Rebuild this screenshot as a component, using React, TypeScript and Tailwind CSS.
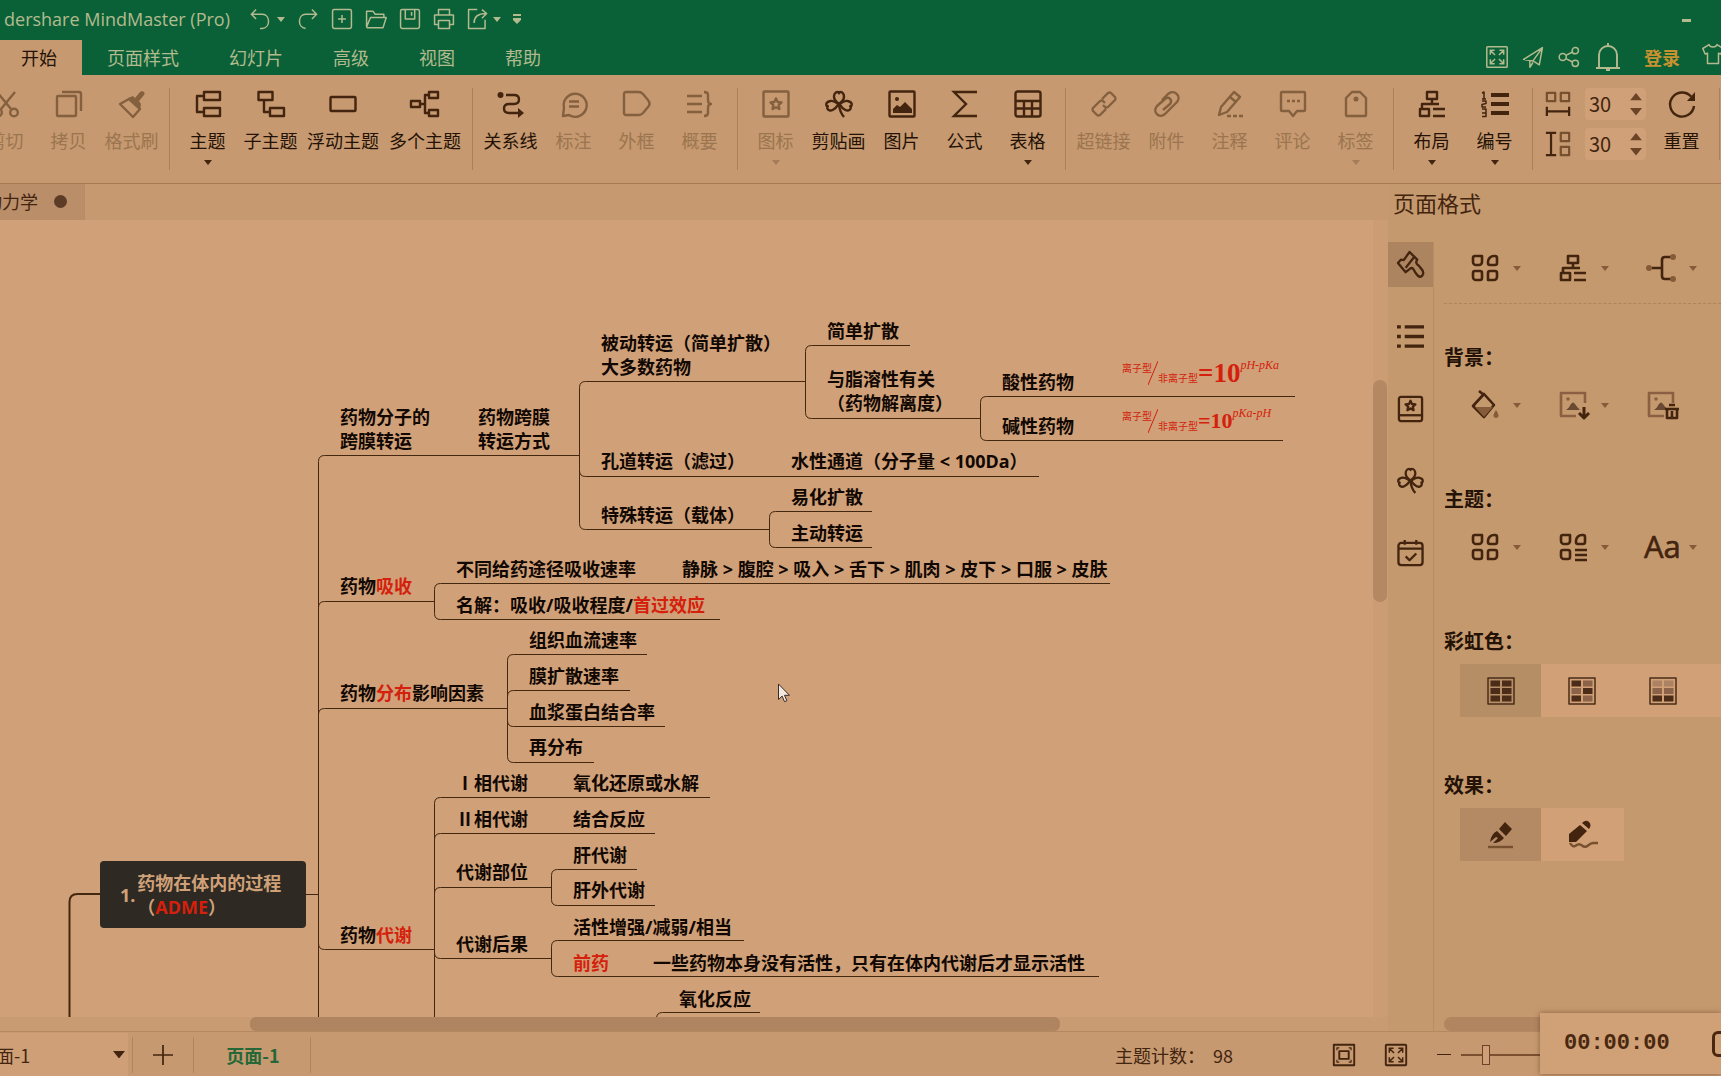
import type { ReactNode } from "react";
import clsx from "clsx";

/* ---------- icons ---------- */

type IconProps = { children: ReactNode; className?: string; stroke?: number };

function Icon({ children, className = "size-7", stroke = 2.4 }: IconProps) {
  return (
    <svg
      viewBox="0 0 28 28"
      className={clsx("shrink-0 overflow-visible", className)}
      fill="none"
      stroke="currentColor"
      strokeWidth={stroke}
      strokeLinejoin="round"
      aria-hidden="true"
    >
      {children}
    </svg>
  );
}

function Caret({ className = "w-2" }: { className?: string }) {
  return (
    <svg viewBox="0 0 8 5" className={clsx("shrink-0", className)} fill="currentColor" aria-hidden="true">
      <path d="M0 0h8L4 5z" />
    </svg>
  );
}

const star = "M14 8.5l1.7 3.5 3.8.5-2.8 2.7.7 3.8-3.4-1.8-3.4 1.8.7-3.8-2.8-2.7 3.8-.5z";

const cloverShape = (
  <>
    <path d="M14 14c-3-2.2-5-4.300-5-7.200C9 4.500 10.500 2 12.500 2c.8 0 1.500.5 1.500 1.200C14 2.500 14.700 2 15.500 2 17.500 2 19 4.500 19 6.800c0 2.900-2 5-5 7.200z" />
    <path d="M13.500 14.200C10.500 12 8 10.500 5.500 11 3 11.500 1 13 1.300 15c.1.900.7 1.300 1.500 1.300-.6.500-.8 1.200-.5 2C3 20.500 5.500 21 7.600 20c2.700-1.200 4.400-3.200 5.900-5.800z" />
    <path d="M14.500 14.200c3-2.200 5.500-3.700 8-3.200 2.500.5 4.500 2 4.200 4-.1.900-.7 1.300-1.500 1.300.6.500.8 1.200.5 2-.7 2.200-3.200 2.700-5.300 1.700-2.700-1.200-4.400-3.200-5.900-5.800z" />
    <path d="M14 14.500c.4 5 2 9 5 12.500" />
  </>
);

const layoutShape = (
  <>
    <path d="M9 2h10v7H9zM14 9v5M4 19v-5h17M2 19h9v7H2z" />
    <path d="M15 19h12M15 26h12" strokeLinejoin="miter" />
  </>
);

const petal = (
  <>
    <path d="M4 2h7v6a3 3 0 0 1-3 3H5a3 3 0 0 1-3-3V4a2 2 0 0 1 2-2z" />
    <path d="M17 8a6 6 0 0 1 6-6h1a2 2 0 0 1 2 2v5a2 2 0 0 1-2 2h-5a2 2 0 0 1-2-2z" />
    <path d="M4 17h5a2 2 0 0 1 2 2v5a2 2 0 0 1-2 2H5a3 3 0 0 1-3-3v-4a2 2 0 0 1 2-2z" />
  </>
);

const fourPetals = (
  <>
    {petal}
    <path d="M19 17h5a2 2 0 0 1 2 2v4a3 3 0 0 1-3 3h-6v-7a2 2 0 0 1 2-2z" />
  </>
);

const pictureShape = (
  <>
    <path d="M26 12V2H2v23h15" stroke="#8a5f42" />
    <circle cx="9" cy="8" r="1.800" fill="#8a5f42" stroke="none" />
    <path d="M7 19q3-2 5-6 2-3 4 0 2 3 5 6z" fill="#6b4a33" stroke="none" />
  </>
);

/* ---------- ribbon ---------- */

type Tool = {
  label: string;
  icon: ReactNode;
  disabled?: boolean;
  menu?: boolean;
  wide?: boolean;
};

const toolGroups: Tool[][] = [
  [
    {
      label: "剪切",
      disabled: true,
      icon: (
        <>
          <path d="M23 2L9 19M5 2l14 17" />
          <circle cx="6" cy="22.500" r="3.800" />
          <circle cx="22" cy="22.500" r="3.800" />
        </>
      ),
    },
    {
      label: "拷贝",
      disabled: true,
      icon: (
        <>
          <rect x="2" y="6" width="19" height="20" rx="1" />
          <path d="M7 2h17a2 2 0 0 1 2 2v17" />
        </>
      ),
    },
    {
      label: "格式刷",
      disabled: true,
      icon: (
        <>
          <path d="M2 14l9-5 11 10-7 8z" />
          <path d="M10 8l5-2 2 2 5-6c2-2 6 0 4 3l-5 6 2 3-1 6z" fill="currentColor" stroke="none" />
        </>
      ),
    },
  ],
  [
    {
      label: "主题",
      menu: true,
      icon: <path d="M10 2h16v8H10zM10 18h16v8H10zM10 6H3v16h7" />,
    },
    {
      label: "子主题",
      icon: <path d="M1.500 2h14v8h-14zM13 18h14v8H13zM7 10v12h6" />,
    },
    {
      label: "浮动主题",
      wide: true,
      icon: <rect x="1.500" y="7" width="25" height="14" rx="1" />,
    },
    {
      label: "多个主题",
      wide: true,
      icon: <path d="M0 11h9v6H0zM18 2h9v6h-9zM18 20h9v6h-9zM18 5h-4v18h4M9 14h5" />,
    },
  ],
  [
    {
      label: "关系线",
      icon: (
        <>
          <circle cx="3.500" cy="5" r="3" fill="currentColor" stroke="none" />
          <path d="M9 5h8q5 0 5 4.500T17 14h-5q-5 0-5 4.500t5 4.500h10" />
          <path d="M21 18l6 5-6 5z" fill="currentColor" stroke="none" />
        </>
      ),
    },
    {
      label: "标注",
      disabled: true,
      icon: <path d="M3 26l1-8a11.500 11.500 0 1 1 5 7zM9 11.500h10M9 16.500h10" />,
    },
    {
      label: "外框",
      disabled: true,
      icon: <path d="M3 2h13q2 0 4 2l5 6q3 4 0 7l-5 6q-2 2-4 2H3q-2 0-2-2V4q0-2 2-2z" />,
    },
    {
      label: "概要",
      disabled: true,
      icon: <path d="M1 6h15M1 14h15M1 22h15M18 2q4 0 4 3v5q0 4 3 4-3 0-3 4v5q0 3-4 3" />,
    },
  ],
  [
    {
      label: "图标",
      disabled: true,
      menu: true,
      icon: (
        <>
          <rect x="1.500" y="1.500" width="25" height="25" rx="1" />
          <path d={star} />
        </>
      ),
    },
    { label: "剪贴画", icon: cloverShape },
    {
      label: "图片",
      icon: (
        <>
          <rect x="1.500" y="1.500" width="25" height="25" rx="1" />
          <circle cx="9" cy="9" r="2" fill="currentColor" stroke="none" />
          <path d="M5 23v-4l4-4 3 2 5-5 7 7v4z" fill="currentColor" stroke="none" />
        </>
      ),
    },
    { label: "公式", icon: <path d="M26 2H3l12 12L3 26h23" strokeLinejoin="miter" /> },
    {
      label: "表格",
      menu: true,
      icon: (
        <>
          <rect x="1.500" y="1.500" width="25" height="25" rx="2" />
          <path d="M2 11h24M2 18.500h24M10 11v15M18 11v15" />
        </>
      ),
    },
  ],
  [
    {
      label: "超链接",
      disabled: true,
      icon: (
        <path d="M12 9l6-6q2-1 3 0l4 4q1 2 0 3l-7 7q-2 1-3 0l-2-2M16 19l-6 6q-2 1-3 0l-4-4q-1-2 0-3l7-7q2-1 3 0l2 2" />
      ),
    },
    {
      label: "附件",
      disabled: true,
      icon: (
        <path d="M9 10l6-6c6-5 14 2 9 8L12 24c-6 5-13-2-8-8l8-7c4-3 8 1 5 5l-7 6" />
      ),
    },
    {
      label: "注释",
      disabled: true,
      icon: (
        <>
          <path d="M3 25l2-8L18 2l6 5L11 22zM14 7l6 5" />
          <path d="M11 26h16" strokeDasharray="4 2" />
        </>
      ),
    },
    {
      label: "评论",
      disabled: true,
      icon: (
        <>
          <path d="M3 2h22q1 0 1 1v17q0 1-1 1h-7l-4 5-4-5H3q-1 0-1-1V3q0-1 1-1z" />
          <path d="M8 11h3M13 11h3M18 11h3" />
        </>
      ),
    },
    {
      label: "标签",
      disabled: true,
      menu: true,
      icon: (
        <>
          <path d="M10 2h8l6 6v17q0 1-1 1H5q-1 0-1-1V8z" />
          <circle cx="14" cy="9" r="2.500" fill="currentColor" stroke="none" />
        </>
      ),
    },
  ],
  [
    { label: "布局", menu: true, icon: layoutShape },
    {
      label: "编号",
      menu: true,
      icon: (
        <>
          <path d="M10 5h18M10 14h18M10 23h18" strokeWidth="4" />
          <path
            d="M1 3l2-1v7M1 9h4M1 11h4v2.500l-4 1v2.500h4M1 19h4v7.500H1M1 23h4"
            strokeWidth="1.500"
          />
        </>
      ),
    },
  ],
];

function ToolButton({ label, icon, disabled, menu, wide }: Tool) {
  return (
    <button
      type="button"
      disabled={disabled}
      className={clsx(
        "flex shrink-0 flex-col items-center",
        wide ? "w-[82px]" : "w-[63px]",
        disabled ? "text-[#84603f]" : "text-[#43240f]",
      )}
    >
      <Icon>{icon}</Icon>
      <span
        className={clsx(
          "mt-2 text-lg leading-7 whitespace-nowrap",
          disabled ? "text-[#9b754f]" : "text-[#241206]",
        )}
      >
        {label}
      </span>
      {menu ? <Caret className={clsx("mt-1.5 w-2", disabled && "opacity-50")} /> : null}
    </button>
  );
}

function Spinner({ label, children }: { label: string; children: ReactNode }) {
  return (
    <div className="flex items-center gap-3.5">
      <Icon className="size-[26px]">{children}</Icon>
      <div className="flex h-8 w-[61px] items-center rounded-sm bg-[#d0a178] pr-1">
        <input
          type="text"
          defaultValue="30"
          aria-label={label}
          className="w-10 min-w-0 flex-1 bg-transparent pl-1 text-xl text-[#43240f] outline-none"
        />
        <div className="flex flex-col gap-2 text-[#6b4326]">
          <button type="button" aria-label={`${label}增加`}>
            <Caret className="w-3 rotate-180" />
          </button>
          <button type="button" aria-label={`${label}减少`}>
            <Caret className="w-3" />
          </button>
        </div>
      </div>
    </div>
  );
}

function Ribbon() {
  return (
    <div className="flex h-[109px] shrink-0 items-start overflow-hidden border-b border-[#a8794f] bg-[#c69970] pt-[13px]">
      {toolGroups.map((group, index) => (
        <div
          key={group[0].label}
          className={clsx(
            "flex h-[82px] shrink-0 items-start border-r border-[#ad8059] px-1.5 pt-0.5",
            index === 0 && "-ml-8",
          )}
        >
          {group.map((tool) => (
            <ToolButton key={tool.label} {...tool} />
          ))}
        </div>
      ))}
      <div className="flex shrink-0 items-start border-r border-[#ad8059] pr-1.5 pl-3">
        <div className="flex flex-col gap-2 text-[#43240f]">
          <Spinner label="水平间距">
            <path d="M2 2h9v9H2zM17 2h9v9h-9z" stroke="#76502f" />
            <path d="M2 17v10M26 17v10M2 22h24" />
          </Spinner>
          <Spinner label="垂直间距">
            <path d="M17 2h9v9h-9zM17 17h9v9h-9z" stroke="#76502f" />
            <path d="M1 2h11M1 26h11M6.500 2v24" />
          </Spinner>
        </div>
        <div className="ml-1 flex pt-0.5">
          <ToolButton
            label="重置"
            icon={
              <>
                <path d="M23 6.500A12 12 0 1 0 26 16" />
                <path d="M27 2v9h-8z" fill="currentColor" stroke="none" />
              </>
            }
          />
        </div>
      </div>
    </div>
  );
}

/* ---------- title bar and menu tabs ---------- */

const menuTabs = ["页面样式", "幻灯片", "高级", "视图", "帮助"];

function IconButton({ label, children, size = "size-[22px]" }: { label: string; children: ReactNode; size?: string }) {
  return (
    <button type="button" aria-label={label} className="shrink-0">
      <Icon className={size} stroke={1.9}>
        {children}
      </Icon>
    </button>
  );
}

// four arrows pointing into the corners of a frame
const expandArrows = (
  <>
    <rect x="1" y="1" width="26" height="26" rx="1" />
    <path
      d="M5.500 11V5.500H11M17 5.500h5.500V11M5.500 17v5.500H11M17 22.500h5.500V17M6 6l5.500 5.500M22 6l-5.500 5.500M6 22l5.500-5.500M22 22l-5.500-5.500"
      strokeWidth="1.900"
      strokeLinejoin="miter"
    />
  </>
);

function Header() {
  return (
    <header className="shrink-0 bg-[#0a6138] text-[#b3ba8e]">
      <div className="flex h-10 items-center overflow-hidden">
        <div className="flex w-[230px] shrink-0 justify-end pb-0.5 font-['Open_Sans','Noto_Sans_CJK_SC',sans-serif] text-lg whitespace-nowrap">
          dershare MindMaster (Pro)
        </div>
        <div className="ml-[19px] flex items-center gap-1.5 pb-0.5">
          <IconButton label="撤销">
            <path d="M9 2L3 8l6 6M3 8h14c10 0 11 17 0 18h-3" />
          </IconButton>
          <Caret />
        </div>
        <div className="ml-3 flex items-center gap-3 pb-0.5">
          <IconButton label="重做">
            <path d="M19 2l6 6-6 6M25 8H11C1 8 0 25 11 26" />
          </IconButton>
          <IconButton label="新建">
            <rect x="2" y="2" width="24" height="24" rx="2" />
            <path d="M14 9v10M9 14h10" />
          </IconButton>
          <IconButton label="打开">
            <path d="M2 24V4h8l3 4h11v4M2 24l5-12h20l-4 13H3z" />
          </IconButton>
          <IconButton label="保存">
            <rect x="2" y="2" width="24" height="24" rx="2" />
            <path d="M8 2v12h12V2M16 5v5" />
          </IconButton>
          <IconButton label="打印">
            <path d="M7 9V2h14v7M7 21H2V9h24v12h-5M7 16h14v10H7z" />
          </IconButton>
          <div className="flex items-center gap-1">
            <IconButton label="导出">
              <path d="M13 2H2v24h21V15M9 19c0-8 5-12 15-12M19 2l6 5-6 6" />
            </IconButton>
            <Caret />
          </div>
          <button type="button" aria-label="自定义工具栏">
            <svg viewBox="0 0 8 10" className="w-2" fill="currentColor" aria-hidden="true">
              <path d="M0 0h8v2H0zM0 4h8v2L4 10 0 6z" />
            </svg>
          </button>
        </div>
        <button type="button" aria-label="最小化" className="mr-[30px] ml-auto px-0 py-2">
          <span className="block h-[3px] w-[9px] bg-current" />
        </button>
      </div>

      <nav className="flex h-[35px] items-stretch overflow-hidden text-lg">
        <button type="button" className="bg-[#c69970] pr-[25px] pb-0.5 pl-[21px] text-[#241206]">
          开始
        </button>
        {menuTabs.map((tab) => (
          <button key={tab} type="button" className="px-[25px] pb-0.5 whitespace-nowrap">
            {tab}
          </button>
        ))}
        <div className="ml-auto flex items-center gap-3.5 pb-0.5">
          <IconButton label="全屏">{expandArrows}</IconButton>
          <IconButton label="发送">
            <path d="M2 17L26 2l-4 22-8-5zM26 2L14 19M10 19v8l4-6" />
          </IconButton>
          <IconButton label="分享">
            <circle cx="6" cy="14" r="4.500" />
            <circle cx="22" cy="6" r="4" />
            <circle cx="22" cy="22" r="4" />
            <path d="M10 12l8-4M10 16l8 4" />
          </IconButton>
          <IconButton label="通知" size="size-7">
            <path d="M2 25h24M5 25V12a9 9 0 0 1 18 0v13M14 3V0M12 27h4" />
          </IconButton>
          <a href="#login" className="ml-2 font-bold text-[#c8922f]">
            登录
          </a>
          <div className="ml-2 w-[19px] overflow-hidden">
            <IconButton label="主题皮肤">
              <path d="M9 2L1 7l3 7 3-1v13h14V13l3 1 3-7-8-5c-1 4-9 4-10 0z" />
            </IconButton>
          </div>
        </div>
      </nav>
    </header>
  );
}

/* ---------- mind map ---------- */

type MapNode = { x: number; y: number; text: ReactNode };

const red = (text: string) => <span className="text-[#d4200c]">{text}</span>;

// x is the left edge, y the top edge of the first 24px line
const nodes: MapNode[] = [
  { x: 340, y: 185, text: <>药物分子的<br />跨膜转运</> },
  { x: 478, y: 185, text: <>药物跨膜<br />转运方式</> },
  { x: 601, y: 111, text: <>被动转运（简单扩散）<br />大多数药物</> },
  { x: 827, y: 99, text: "简单扩散" },
  { x: 827, y: 147, text: <>与脂溶性有关<br />（药物解离度）</> },
  { x: 1002, y: 150, text: "酸性药物" },
  { x: 1002, y: 194, text: "碱性药物" },
  { x: 601, y: 229, text: "孔道转运（滤过）" },
  { x: 791, y: 229, text: "水性通道（分子量 < 100Da）" },
  { x: 601, y: 283, text: "特殊转运（载体）" },
  { x: 791, y: 265, text: "易化扩散" },
  { x: 791, y: 301, text: "主动转运" },
  { x: 340, y: 354, text: <>药物{red("吸收")}</> },
  { x: 456, y: 337, text: "不同给药途径吸收速率" },
  { x: 682, y: 337, text: "静脉 > 腹腔 > 吸入 > 舌下 > 肌肉 > 皮下 > 口服 > 皮肤" },
  { x: 456, y: 373, text: <>名解：吸收/吸收程度/{red("首过效应")}</> },
  { x: 529, y: 408, text: "组织血流速率" },
  { x: 340, y: 461, text: <>药物{red("分布")}影响因素</> },
  { x: 529, y: 444, text: "膜扩散速率" },
  { x: 529, y: 480, text: "血浆蛋白结合率" },
  { x: 529, y: 515, text: "再分布" },
  { x: 456, y: 551, text: "Ⅰ相代谢" },
  { x: 573, y: 551, text: "氧化还原或水解" },
  { x: 456, y: 587, text: "Ⅱ相代谢" },
  { x: 573, y: 587, text: "结合反应" },
  { x: 573, y: 623, text: "肝代谢" },
  { x: 456, y: 640, text: "代谢部位" },
  { x: 573, y: 658, text: "肝外代谢" },
  { x: 340, y: 703, text: <>药物{red("代谢")}</> },
  { x: 573, y: 695, text: "活性增强/减弱/相当" },
  { x: 456, y: 712, text: "代谢后果" },
  { x: 573, y: 731, text: red("前药") },
  { x: 653, y: 731, text: "一些药物本身没有活性，只有在体内代谢后才显示活性" },
  { x: 679, y: 767, text: "氧化反应" },
];

const links = [
  // trunk out of the root topic
  "M306 674.500H318.500",
  "M318.500 900V241.500Q318.500 235.500 324.500 235.500H579.500",
  "M318.500 387.500Q318.500 381.500 324.500 381.500H434.500",
  "M318.500 494.500Q318.500 488.500 324.500 488.500H507.500",
  "M318.500 723.500Q318.500 729.500 324.500 729.500H434.500",
  // membrane transport
  "M805.500 161.500H585.500Q579.500 161.500 579.500 167.500V303.500Q579.500 309.500 585.500 309.500H769.500",
  "M579.500 250.500Q579.500 256.500 585.500 256.500H1039",
  "M910 125.500H811.500Q805.500 125.500 805.500 131.500V192.500Q805.500 198.500 811.500 198.500H980.500",
  "M1295 176.500H986.500Q980.500 176.500 980.500 182.500V214.500Q980.500 220.500 986.500 220.500H1283",
  "M872 291.500H775.500Q769.500 291.500 769.500 297.500V321.500Q769.500 327.500 775.500 327.500H872",
  // absorption
  "M1110 363.500H440.500Q434.500 363.500 434.500 369.500V393.500Q434.500 399.500 440.500 399.500H720",
  // distribution
  "M647 434.500H513.500Q507.500 434.500 507.500 440.500V536.500Q507.500 542.500 513.500 542.500H594",
  "M507.500 476.500Q507.500 470.500 513.500 470.500H630",
  "M507.500 500.500Q507.500 506.500 513.500 506.500H665",
  // metabolism
  "M710 577.500H440.500Q434.500 577.500 434.500 583.500V900",
  "M434.500 619.500Q434.500 613.500 440.500 613.500H655",
  "M434.500 673.500Q434.500 667.500 440.500 667.500H551.500",
  "M434.500 732.500Q434.500 738.500 440.500 738.500H551.500",
  "M637 649.500H557.500Q551.500 649.500 551.500 655.500V679.500Q551.500 685.500 557.500 685.500H655",
  "M744 720.500H557.500Q551.500 720.500 551.500 726.500V750.500Q551.500 756.500 557.500 756.500H1099",
  "M760 792.500H662.500Q656.500 792.500 656.500 798.500V900",
];

function Formula({ big, exponent }: { big: string; exponent: string }) {
  return (
    <div className="flex items-start font-['Liberation_Serif','Noto_Sans_CJK_SC',serif] font-normal text-[#d4200c]">
      <span className="pt-1 text-[10px] leading-4">离子型</span>
      <svg viewBox="0 0 10 24" className="mt-1 -ml-1 h-6 w-2.5" stroke="currentColor" aria-hidden="true">
        <path d="M10 0L0 24" />
      </svg>
      <span className="pt-3.5 text-[10px] leading-4">非离子型</span>
      <span className={clsx("leading-8 font-bold", big)}>=10</span>
      <span className="text-xs leading-4 italic">{exponent}</span>
    </div>
  );
}

function MindMap() {
  return (
    <div className="relative min-w-0 flex-1 overflow-hidden bg-[#d0a178] font-['Noto_Sans','Noto_Sans_CJK_SC',sans-serif] text-lg leading-6 font-bold text-[#120803]">
      <svg className="absolute top-0 left-0 overflow-visible" width="1" height="1" fill="none" aria-hidden="true">
        <path d="M69.500 900V682Q69.500 674 77.500 674H100" stroke="#43280f" strokeWidth="2" />
        {links.map((d) => (
          <path key={d} d={d} stroke="#43280f" />
        ))}
      </svg>

      <div className="absolute top-[641px] left-[100px] flex h-[67px] w-[206px] items-center gap-0.5 rounded-[4px] bg-[#2e2922] pl-5 text-[#d0a178]">
        <span>1.</span>
        <span className="whitespace-nowrap">
          药物在体内的过程
          <br />（{red("ADME")}）
        </span>
      </div>

      {nodes.map((node) => (
        <div
          key={`${node.x}-${node.y}`}
          className="absolute whitespace-nowrap"
          style={{ left: node.x, top: node.y }}
        >
          {node.text}
        </div>
      ))}

      <div className="absolute top-[137px] left-[1122px]">
        <Formula big="text-[27px]" exponent="pH-pKa" />
      </div>
      <div className="absolute top-[185px] left-[1122px]">
        <Formula big="text-[22px]" exponent="pKa-pH" />
      </div>

      <svg viewBox="0 0 12 20" className="absolute top-[463px] left-[778px] h-5 w-3" aria-hidden="true">
        <path d="M.5 1v15.500l3.600-3.400 2.400 5.600 2.400-1-2.400-5.400h5z" fill="#f1e8e0" stroke="#3a2a28" />
      </svg>
    </div>
  );
}

/* ---------- format panel ---------- */

const sideTabs: { label: string; icon: ReactNode }[] = [
  {
    label: "页面格式",
    icon: (
      <path d="M1 12.500L4 9l3 .5L13 1l8 8q-2 3 0 5 2 1 3 3 4 4 3 7-2 4-5 2-3-3-5-7-1-2-3-1l-5 4zM9 17.500L18 6" />
    ),
  },
  {
    label: "大纲",
    icon: (
      <>
        <path d="M8 4h20M8 14h20M8 24h20" strokeWidth="3.500" />
        <path d="M0 4h4M0 14h4M0 24h4" strokeWidth="3.500" />
      </>
    ),
  },
  {
    label: "图标",
    icon: (
      <>
        <rect x="2" y="2" width="24" height="25" rx="2" />
        <path d="M2 21h24" />
        <path d="M14 6l1.500 3.300 3.600.4-2.700 2.400.8 3.600-3.200-1.800-3.200 1.800.8-3.600-2.700-2.400 3.600-.4z" />
      </>
    ),
  },
  { label: "剪贴画", icon: cloverShape },
  {
    label: "任务",
    icon: (
      <>
        <rect x="1.500" y="4" width="25" height="23" rx="3" />
        <path d="M2 10h24M8 1v5M20 1v5M9 18l4 4 7-7" />
      </>
    ),
  },
];

type MenuIcon = { label: string; icon: ReactNode; plain?: boolean };

function IconRow({ items }: { items: MenuIcon[] }) {
  return (
    <div className="flex gap-[15px] pl-[37px] text-[#43240f]">
      {items.map((item) => (
        <button
          key={item.label}
          type="button"
          aria-label={item.label}
          className="flex h-8 w-[73px] shrink-0 items-center gap-3.5"
        >
          <Icon stroke={2.6}>{item.icon}</Icon>
          {item.plain ? null : <Caret className="w-2 text-[#865b3a]" />}
        </button>
      ))}
    </div>
  );
}

function PanelHeading({ children }: { children: ReactNode }) {
  return <h3 className="pl-2.5 text-xl leading-8 font-bold text-[#241206]">{children}</h3>;
}

const d = "#4a2c18";
const m = "#8a6348";
const l = "#ab8262";

const rainbow = [
  { label: "单色", cells: [d, d, d, d, d, d] },
  { label: "多彩", cells: [d, m, m, d, d, m] },
  { label: "渐变", cells: [l, l, m, m, d, d] },
];

function FormatPanel() {
  return (
    <aside className="flex w-[333px] shrink-0 flex-col overflow-hidden bg-[#c5996e] text-[#43240f]">
      <h2 className="h-[58px] shrink-0 pt-0.5 pl-[5px] text-[22px] leading-8">页面格式</h2>
      <div className="flex min-h-0 flex-1">
        <div className="flex w-[46px] shrink-0 flex-col gap-[27px] border-r border-[#b98c66]">
          {sideTabs.map((tab, index) => (
            <button
              key={tab.label}
              type="button"
              aria-label={tab.label}
              className={clsx(
                "flex size-[45px] items-center justify-center",
                index === 0 && "bg-[#ac845f]",
              )}
            >
              <Icon className="size-[27px]">{tab.icon}</Icon>
            </button>
          ))}
        </div>

        <div className="flex min-w-0 flex-1 flex-col">
          <div className="flex h-[61px] flex-col pt-2.5">
            <IconRow
              items={[
                { label: "主题样式", icon: fourPetals },
                { label: "布局样式", icon: layoutShape },
                {
                  label: "连线样式",
                  icon: (
                    <>
                      <path d="M5 14h9M24 3h-6q-3 0-3 3v16q0 3 3 3h6" />
                      <circle cx="2" cy="14" r="3" fill="#865b3a" stroke="none" />
                      <circle cx="26" cy="3" r="3" fill="#865b3a" stroke="none" />
                      <circle cx="26" cy="25" r="3" fill="#865b3a" stroke="none" />
                    </>
                  ),
                },
              ]}
            />
          </div>
          <div className="ml-2.5 border-t border-dashed border-[#b0835d]" />

          <div className="mt-[37px]">
            <PanelHeading>背景：</PanelHeading>
          </div>
          <div className="mt-4">
            <IconRow
              items={[
                {
                  label: "填充",
                  icon: (
                    <>
                      <path d="M13 3L2 15l11 11 10-12zM13 4L8 0" />
                      <path d="M4 16h18l-9 10z" fill="#865b3a" stroke="none" />
                      <path d="M25 19q5 7 0 8-5-1 0-8z" fill="#865b3a" stroke="none" />
                    </>
                  ),
                },
                {
                  label: "背景图片",
                  icon: <>{pictureShape}<path d="M25 16v11M20 22l5 5 5-5" strokeWidth="3" /></>,
                },
                {
                  label: "移除背景",
                  plain: true,
                  icon: <>{pictureShape}<path d="M18 18h14M22 14h6M20 19v8h10v-8M25 20v6" /></>,
                },
              ]}
            />
          </div>

          <div className="mt-[62px]">
            <PanelHeading>主题：</PanelHeading>
          </div>
          <div className="mt-4">
            <IconRow
              items={[
                { label: "主题", icon: fourPetals },
                { label: "主题颜色", icon: <>{petal}<path d="M16 17h12M16 22h12M16 27h12" /></> },
                {
                  label: "主题字体",
                  icon: (
                    <text
                      x="-3"
                      y="25"
                      fill="currentColor"
                      strokeWidth="0.600"
                      className="font-['Open_Sans',sans-serif] text-[31px]"
                    >
                      Aa
                    </text>
                  ),
                },
              ]}
            />
          </div>

          <div className="mt-[62px]">
            <PanelHeading>彩虹色：</PanelHeading>
          </div>
          <div className="mt-[7px] ml-[26px] flex h-[53px] bg-[#d1a077]">
            {rainbow.map((option, index) => (
              <button
                key={option.label}
                type="button"
                aria-label={option.label}
                className={clsx(
                  "flex w-[81px] shrink-0 items-center justify-center",
                  index === 0 && "bg-[#b68e66]",
                )}
              >
                <Icon stroke={1.5}>
                  <rect x="1" y="1" width="26" height="26" stroke={d} />
                  {option.cells.map((fill, cell) => (
                    <rect
                      key={cell}
                      x={cell % 2 ? 15 : 3.5}
                      y={3.5 + Math.floor(cell / 2) * 7.5}
                      width="9.500"
                      height="6"
                      fill={fill}
                      stroke="none"
                    />
                  ))}
                </Icon>
              </button>
            ))}
          </div>

          <div className="mt-[52px]">
            <PanelHeading>效果：</PanelHeading>
          </div>
          <div className="mt-[7px] ml-[26px] flex h-[53px]">
            <button type="button" aria-label="直线" className="flex w-[81px] items-center justify-center bg-[#b48a64]">
              <Icon>
                <path d="M1 26h25" stroke="#76502f" />
                <path d="M3 21q1-8 7-11l7 7q-4 5-11 5l5-5-2-1zM12 8l6-7 7 7-6 7z" fill="currentColor" stroke="none" />
              </Icon>
            </button>
            <button type="button" aria-label="手绘" className="flex w-[83px] items-center justify-center bg-[#d1a077]">
              <Icon>
                <path d="M1 22q3 5 6 2.500t6 0 6 0 5-2.500h5" stroke="#76502f" />
                <path d="M0 21v-8L11 4l7 6L7 21zM13 2q4-4 7-1 3 3 0 7z" fill="currentColor" stroke="none" />
              </Icon>
            </button>
          </div>

          <div className="mt-auto ml-2.5 h-3.5 rounded-l-full bg-[#b18560]" />
        </div>
      </div>
    </aside>
  );
}

/* ---------- status bar ---------- */

function StatusBar() {
  return (
    <footer className="flex h-[45px] shrink-0 items-center overflow-hidden border-t border-[#b58860] bg-[#c69970] pt-px text-lg text-[#43240f]">
      <div className="relative flex h-full w-32 shrink-0 items-center overflow-hidden bg-[#cfa077]">
        <select
          aria-label="当前页面"
          className="-ml-[22px] w-[150px] shrink-0 appearance-none bg-transparent outline-none"
          defaultValue="1"
        >
          <option value="1">页面-1</option>
        </select>
        <Caret className="pointer-events-none absolute right-[3px] w-3" />
      </div>
      <button
        type="button"
        aria-label="新增页面"
        className="ml-1 flex h-9 w-[62px] shrink-0 items-center justify-center border-x border-[#b08560]"
      >
        <Icon className="size-5">
          <path d="M14 0v28M0 14h28" />
        </Icon>
      </button>
      <button
        type="button"
        className="flex h-9 w-[117px] shrink-0 items-center justify-center border-r border-[#b08560] pl-0.5 font-bold text-[#256736]"
      >
        页面-1
      </button>

      <div className="ml-auto flex shrink-0 gap-2 whitespace-nowrap">
        <span>主题计数：</span>
        <span>98</span>
      </div>
      <button type="button" aria-label="适应窗口" className="ml-[100px] shrink-0">
        <Icon className="size-[22px]">
          <rect x="1" y="1" width="26" height="26" />
          <rect x="8" y="9" width="12" height="10" />
          <path d="M5 8V5h3M20 5h3v3M23 20v3h-3M8 23H5v-3" strokeWidth="1.500" />
        </Icon>
      </button>
      <button type="button" aria-label="全屏显示" className="ml-[30px] shrink-0">
        <Icon className="size-[22px]">{expandArrows}</Icon>
      </button>
      <button type="button" aria-label="缩小" className="ml-[30px] shrink-0 py-2">
        <span className="block h-px w-3.5 bg-current" />
      </button>
      <input
        type="range"
        aria-label="缩放"
        defaultValue={12}
        className="mr-[80px] ml-2.5 h-0.5 w-[180px] shrink-0 appearance-none bg-[#7b5030] [&::-webkit-slider-thumb]:h-5 [&::-webkit-slider-thumb]:w-2 [&::-webkit-slider-thumb]:appearance-none [&::-webkit-slider-thumb]:border [&::-webkit-slider-thumb]:border-[#6b4326] [&::-webkit-slider-thumb]:bg-[#cfa077]"
      />
    </footer>
  );
}

function RecordingTimer() {
  return (
    <div className="absolute right-0 bottom-0.5 flex h-[61px] w-[181px] items-center overflow-hidden bg-[#d0a077] pl-6 text-[#4a2810] shadow-[0_0_5px_rgba(70,40,20,0.5)]">
      <time className="font-['Liberation_Mono',monospace] text-[22px] leading-8 font-bold">00:00:00</time>
      <span className="ml-[42px] h-[26px] w-6 shrink-0 rounded-md border-[3px] border-current" />
    </div>
  );
}

export default function App() {
  return (
    <div className="relative flex h-screen flex-col overflow-hidden bg-[#c69970] font-['Noto_Sans_CJK_SC',sans-serif]">
      <Header />
      <Ribbon />

      <main className="flex min-h-0 flex-1">
        <div className="flex min-w-0 flex-1 flex-col">
          <div className="flex h-9 shrink-0">
            <div className="flex w-[85px] items-center gap-4 overflow-hidden border-r border-[#b98c66] bg-[#b98e69] pb-0.5 text-lg text-[#43240f]">
              <span className="flex w-[38px] shrink-0 justify-end whitespace-nowrap">药物动力学</span>
              <span className="size-[13px] shrink-0 rounded-full bg-[#5c3c26]" />
            </div>
          </div>
          <div className="flex min-h-0 flex-1">
            <MindMap />
            <div className="w-[15px] shrink-0 bg-[#cc9d74] pt-40">
              <div className="h-[222px] w-3.5 rounded-full bg-[#b38862]" />
            </div>
          </div>
          <div className="h-3.5 shrink-0 bg-[#c99b72] pl-[250px]">
            <div className="h-full w-[810px] rounded-md bg-[#af8460]" />
          </div>
        </div>
        <FormatPanel />
      </main>

      <StatusBar />
      <RecordingTimer />
    </div>
  );
}
